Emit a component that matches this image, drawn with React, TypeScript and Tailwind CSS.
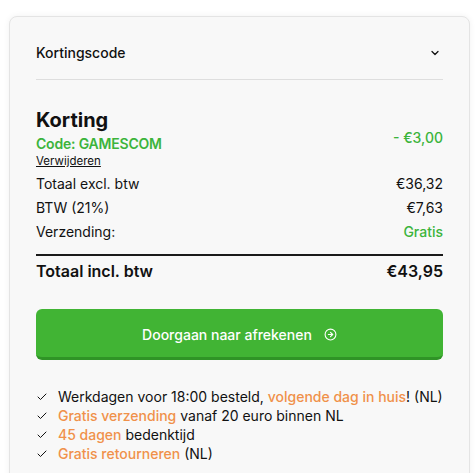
import { ChevronDown, CircleArrowRight, Check } from "lucide-react";

const perks = [
  { pre: "Werkdagen voor 18:00 besteld, ", hl: "volgende dag in huis", post: "! (NL)" },
  { pre: "", hl: "Gratis verzending", post: " vanaf 20 euro binnen NL" },
  { pre: "", hl: "45 dagen", post: " bedenktijd" },
  { pre: "", hl: "Gratis retourneren", post: " (NL)" },
];

export default function App() {
  return (
    <div className="min-h-screen bg-white pt-4 pl-[9px] font-['Inter',sans-serif] text-[#111]">
      <div className="w-[461px] h-[480px] bg-[#f8f8f8] border border-[#e4e4e4] rounded-lg shadow-[0_0_6px_rgba(0,0,0,0.06)] px-[26px]">

        {/* Kortingscode */}
        <div className="flex items-center justify-between pt-[26px] pb-4 border-b border-[#dedede]">
          <span className="text-sm font-medium leading-5">Kortingscode</span>
          <ChevronDown className="w-3 h-3 mr-[2px]" strokeWidth={2.5} />
        </div>

        {/* Korting */}
        <div className="flex items-center justify-between mt-[26px]">
          <div className="flex flex-col">
            <h2 className="text-xl font-bold leading-7">Korting</h2>
            <span className="text-sm font-semibold leading-5 tracking-[-0.2px] text-[#3cb43c]">Code: GAMESCOM</span>
            <span className="text-[11.5px] leading-[15px] underline">Verwijderen</span>
          </div>
          <span className="text-sm font-medium text-[#3cb43c]">- €3,00</span>
        </div>

        {/* Rows */}
        <div className="mt-[3px] text-sm">
          <div className="flex justify-between h-6 items-center">
            <span>Totaal excl. btw</span>
            <span>€36,32</span>
          </div>
          <div className="flex justify-between h-6 items-center">
            <span>BTW (21%)</span>
            <span>€7,63</span>
          </div>
          <div className="flex justify-between h-6 items-center">
            <span>Verzending:</span>
            <span className="font-medium text-[#3cb43c]">Gratis</span>
          </div>
        </div>

        <div className="mt-[10px] border-t-2 border-[#1a1a1a] pt-[3px] flex justify-between items-center text-base font-semibold leading-6">
          <span>Totaal incl. btw</span>
          <span>€43,95</span>
        </div>

        {/* Checkout */}
        <button className="mt-[26px] w-full h-[51px] flex items-center justify-center gap-2 bg-[#41b434] border-b-[3px] border-[#2f9426] rounded-md text-white text-sm font-medium pt-[3px]">
          Doorgaan naar afrekenen
          <CircleArrowRight className="w-[13px] h-[13px] ml-1" strokeWidth={2} />
        </button>

        {/* Perks */}
        <ul className="mt-[27px] text-sm leading-[19px]">
          {perks.map((p, i) => (
            <li key={i} className="flex items-center gap-[10px] whitespace-nowrap">
              <Check className="w-3 h-3 shrink-0" strokeWidth={2} />
              <span>
                {p.pre}
                <span className="font-medium text-[#f0914a]">{p.hl}</span>
                {p.post}
              </span>
            </li>
          ))}
        </ul>

      </div>
    </div>
  );
}
